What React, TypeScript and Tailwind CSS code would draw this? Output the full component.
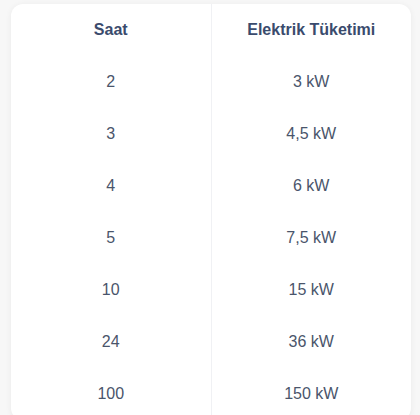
const rows: [string, string][] = [
  ["2", "3 kW"],
  ["3", "4,5 kW"],
  ["4", "6 kW"],
  ["5", "7,5 kW"],
  ["10", "15 kW"],
  ["24", "36 kW"],
  ["100", "150 kW"],
];

export default function App() {
  return (
    <div className="min-h-screen bg-[#f7f7f7] px-[11px] pt-[4px] [font-family:'Liberation_Sans',Arial,sans-serif]">
      <div className="w-[400px] rounded-xl bg-white shadow-[0_1px_6px_rgba(0,0,0,0.06)] overflow-hidden">
        <table className="w-full table-fixed border-collapse text-center">
          <thead>
            <tr>
              <th className="h-[52px] border-r border-[#f0f1f4] text-[16px] font-bold text-[#3a4b6d]">Saat</th>
              <th className="h-[52px] text-[16px] font-bold text-[#3a4b6d]">Elektrik Tüketimi</th>
            </tr>
          </thead>
          <tbody>
            {rows.map(([h, kw]) => (
              <tr key={h}>
                <td className="h-[52px] border-r border-[#f0f1f4] text-[16px] text-[#4a556b]">{h}</td>
                <td className="h-[52px] text-[16px] text-[#4a556b]">{kw}</td>
              </tr>
            ))}
          </tbody>
        </table>
      </div>
    </div>
  );
}
